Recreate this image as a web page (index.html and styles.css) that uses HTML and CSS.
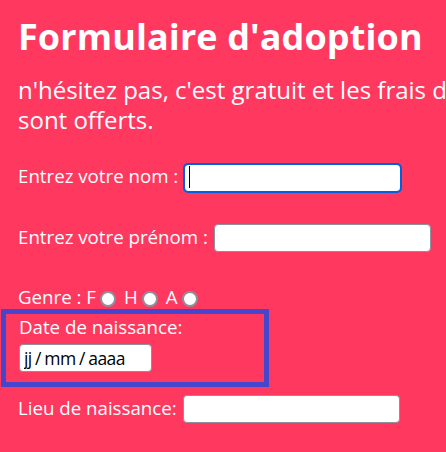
FILE: index.html
```html
<!DOCTYPE html>
<html lang="fr">
<head>
<meta charset="utf-8">
<title>Formulaire d'adoption</title>
<link rel="stylesheet" href="styles.css">
</head>
<body>
<main class="page">
  <h1 class="title">Formulaire d'adoption</h1>
  <p class="intro">n'hésitez pas, c'est gratuit et les frais d'adoption<br>sont offerts.</p>
  <form class="form">
    <div class="row row-nom">
      <label class="lbl" for="nom">Entrez votre nom :</label>
      <span class="field-wrap"><input class="field focused" id="nom" type="text"><span class="caret"></span></span>
    </div>
    <div class="row row-prenom">
      <label class="lbl" for="prenom">Entrez votre prénom :</label>
      <input class="field" id="prenom" type="text">
    </div>
    <div class="genre">
      <span>Genre : F</span><input class="radio" type="radio" name="g"><span>H</span><input class="radio" type="radio" name="g"><span>A</span><input class="radio" type="radio" name="g">
    </div>
    <div class="datebox">
      <label class="date-lbl" for="dn">Date de naissance:</label>
      <input class="date-field" id="dn" type="text" value="jj / mm / aaaa" readonly>
    </div>
    <div class="row row-lieu">
      <label class="lbl" for="lieu">Lieu de naissance:</label>
      <input class="field" id="lieu" type="text">
    </div>
  </form>
</main>
</body>
</html>
```
FILE: styles.css
```css
html, body {
  margin: 0;
  padding: 0;
  background: #ff3860;
}
body {
  width: 446px;
  height: 452px;
  overflow: hidden;
  color: #ffffff;
  font-family: "Open Sans", "Noto Sans", sans-serif;
}
.page {
  padding: 15px 0 0 18px;
  white-space: nowrap;
}
.title {
  margin: 0;
  font-size: 36px;
  line-height: 44px;
  font-weight: 700;
  letter-spacing: 0.1px;
}
.intro {
  margin: 16px 0 0 0;
  font-size: 24px;
  line-height: 30px;
}
.form {
  margin: 27px 0 0 0;
  display: flex;
  flex-direction: column;
}
.row {
  display: flex;
  align-items: flex-start;
  height: 28px;
  font-size: 18.7px;
  line-height: 28px;
}
.row-prenom { margin-top: 33px; }
.lbl { margin-right: 6px; }
.field-wrap { position: relative; display: block; }
.field {
  box-sizing: border-box;
  width: 217px;
  height: 28px;
  margin: 1px 0 0 0;
  border: 1px solid #8f8f9d;
  border-radius: 4px;
  background: #ffffff;
  padding: 0 4px;
  font-size: 16px;
}
.focused {
  outline: 2px solid #0060df;
  outline-offset: -1px;
}
.caret {
  position: absolute;
  left: 5px;
  top: 4px;
  width: 1px;
  height: 22px;
  background: #000000;
}
.genre {
  margin-top: 34px;
  display: flex;
  align-items: center;
  height: 24px;
  font-size: 18.7px;
  line-height: 24px;
}
.radio {
  -webkit-appearance: none;
  appearance: none;
  box-sizing: border-box;
  width: 16px;
  height: 16px;
  margin: 3px 8px 0 4px;
  border: 2px solid #8f8f9d;
  border-radius: 50%;
  background: #ffffff;
}
.datebox {
  margin: 0 0 0 -17px;
  width: 268px;
  box-sizing: border-box;
  border: 5px solid #4646cc;
  padding: 1px 0 10px 13px;
  display: flex;
  flex-direction: column;
  align-items: flex-start;
}
.date-lbl {
  font-size: 18.7px;
  line-height: 24px;
}
.date-field {
  box-sizing: border-box;
  margin-top: 5px;
  width: 133px;
  height: 28px;
  border: 1px solid #8f8f9d;
  border-radius: 4px;
  background: #ffffff;
  padding: 0 4px;
  color: #000000;
  font-family: "Open Sans", "Noto Sans", sans-serif;
  font-size: 17.5px;
  letter-spacing: -0.6px;
  word-spacing: -0.5px;
}
.row-lieu { margin-top: 7px; }
```
